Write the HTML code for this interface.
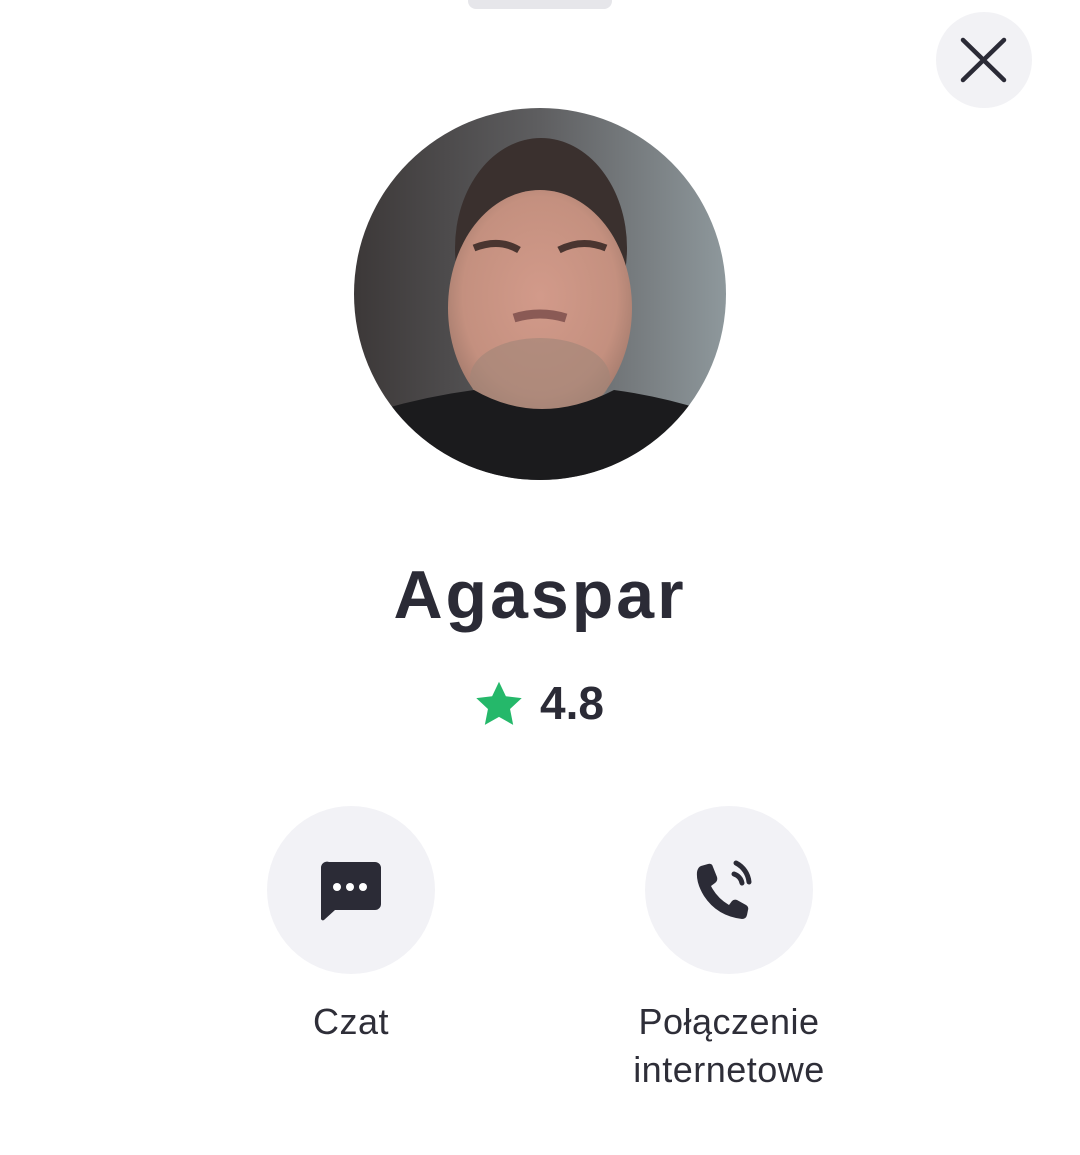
<!DOCTYPE html>
<html><head><meta charset="utf-8"><style>
html,body{margin:0;padding:0;background:#fff;width:1080px;height:1155px;overflow:hidden;font-family:"Liberation Sans",sans-serif;color:#2b2b36}
.abs{position:absolute}
.handle{left:468px;top:-10px;width:144px;height:19px;background:#e6e6ea;border-radius:8px}
.close{left:936px;top:12px;width:96px;height:96px;border-radius:50%;background:#f2f2f5}
.name{left:0;width:1080px;top:556px;text-align:center;font-size:68px;font-weight:bold;letter-spacing:3px}
.rate{left:540px;top:676px;font-size:46px;font-weight:bold}
.btn{width:168px;height:168px;border-radius:50%;background:#f2f2f6;top:806px}
.lbl{font-size:36px;text-align:center;width:300px;line-height:48px;color:#2e2e38;letter-spacing:0.5px}
</style></head><body>
<div class="abs handle"></div>
<div class="abs close"><svg width="96" height="96" viewBox="0 0 96 96"><path d="M27 28L68 68M68 28L27 68" stroke="#2b2b36" stroke-width="4.5" stroke-linecap="round"/></svg></div>
<svg class="abs" style="left:354px;top:108px" width="372" height="372" viewBox="0 0 372 372">
<defs><clipPath id="c"><circle cx="186" cy="186" r="186"/></clipPath>
<linearGradient id="bg" x1="0" x2="1"><stop offset="0" stop-color="#3c3838"/><stop offset="0.5" stop-color="#5e5e60"/><stop offset="1" stop-color="#8e989c"/></linearGradient>
<radialGradient id="sk" cx="0.5" cy="0.45" r="0.6"><stop offset="0" stop-color="#d29a8a"/><stop offset="0.7" stop-color="#c4907f"/><stop offset="1" stop-color="#9a7568"/></radialGradient></defs>
<g clip-path="url(#c)">
<rect width="372" height="372" fill="url(#bg)"/>
<ellipse cx="187" cy="140" rx="86" ry="110" fill="#3a302e"/>
<ellipse cx="186" cy="200" rx="92" ry="118" fill="url(#sk)"/>
<ellipse cx="186" cy="270" rx="70" ry="40" fill="#a08578" opacity="0.6"/>
<path d="M120 140 Q145 130 165 142 M205 142 Q228 130 252 140" stroke="#4a3530" stroke-width="7" fill="none"/>
<path d="M160 210 Q186 202 212 210" stroke="#8a5a55" stroke-width="9" fill="none"/>
<path d="M0 310 Q60 290 120 282 Q186 320 260 282 Q320 290 372 310 L372 372 L0 372Z" fill="#1b1b1d"/>
</g></svg>
<div class="abs name">Agaspar</div>
<svg class="abs" style="left:474px;top:680px" width="50" height="48" viewBox="0 0 24 23"><path d="M12 0.8l3.3 7 7.6.9-5.6 5.2 1.5 7.6L12 17.7l-6.8 3.8 1.5-7.6L1.1 8.7l7.6-.9z" fill="#25b86a"/></svg>
<div class="abs rate">4.8</div>
<div class="abs btn" style="left:267px"><svg width="168" height="168" viewBox="0 0 168 168"><path d="M62 56h46a6 6 0 0 1 6 6v36a6 6 0 0 1-6 6H68l-11 10a2 2 0 0 1-3-1V62a6 6 0 0 1 8-6z" fill="#2b2b36"/><circle cx="70" cy="81" r="4" fill="#fff"/><circle cx="83" cy="81" r="4" fill="#fff"/><circle cx="96" cy="81" r="4" fill="#fff"/></svg></div>
<div class="abs btn" style="left:645px"><svg width="168" height="168" viewBox="0 0 168 168"><path d="M56 60 L63 58 Q67 57 68 61 L72 71 Q73 75 70 77 L66 80 Q72 92 84 99 L87 95 Q89 93 92 94 L101 99 Q104 101 103 104 L102 109 Q101 113 97 113 Q72 110 59 90 Q51 77 52 66 Q53 61 56 60Z" fill="#2b2b36"/><path d="M89 68a12 12 0 0 1 8 9" stroke="#2b2b36" stroke-width="5" fill="none" stroke-linecap="round"/><path d="M91 57a24 24 0 0 1 13 19" stroke="#2b2b36" stroke-width="5" fill="none" stroke-linecap="round"/></svg></div>
<div class="abs lbl" style="left:201px;top:998px">Czat</div>
<div class="abs lbl" style="left:579px;top:998px">Połączenie<br>internetowe</div>
</body></html>
